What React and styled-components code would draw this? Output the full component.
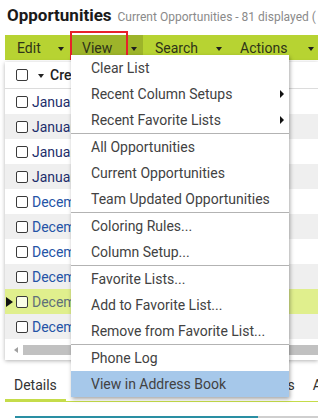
import React from 'react'
import styled, { createGlobalStyle } from 'styled-components'

const GlobalStyle = createGlobalStyle`
  body {
    margin: 0;
    font-family: Roboto, 'Liberation Sans', sans-serif;
    background: #fff;
    overflow: hidden;
  }
`;

const rows = [
    { label: 'January 2024', tone: 'navy' },
    { label: 'January 2024', tone: 'navy' },
    { label: 'January 2024', tone: 'navy' },
    { label: 'January 2024', tone: 'navy' },
    { label: 'December 2023', tone: 'blue' },
    { label: 'December 2023', tone: 'blue' },
    { label: 'December 2023', tone: 'blue' },
    { label: 'December 2023', tone: 'blue' },
    { label: 'December 2023', tone: 'blue', current: true },
    { label: 'December 2023', tone: 'blue' },
];

const menu = [
    [{ text: 'Clear List' }, { text: 'Recent Column Setups', sub: true }, { text: 'Recent Favorite Lists', sub: true }],
    [{ text: 'All Opportunities' }, { text: 'Current Opportunities' }, { text: 'Team Updated Opportunities' }],
    [{ text: 'Coloring Rules...' }, { text: 'Column Setup...' }],
    [{ text: 'Favorite Lists...' }, { text: 'Add to Favorite List...' }, { text: 'Remove from Favorite List...' }],
    [{ text: 'Phone Log' }, { text: 'View in Address Book', hover: true }],
];

const toolbar = [
    { label: 'Edit', width: 65 },
    { label: 'View', width: 73, active: true },
    { label: 'Search', width: 85 },
    { label: 'Actions', width: 92 },
];

export default function App() {
    return (
        <Page>
            <GlobalStyle />
            <Header>
                <Title>Opportunities</Title>
                <Subtitle>Current Opportunities - 81 displayed (</Subtitle>
            </Header>

            <Toolbar>
                {toolbar.map((b) => (
                    <ToolButton key={b.label} $width={b.width} $active={b.active}>
                        {b.label}
                        <Caret />
                    </ToolButton>
                ))}
            </Toolbar>
            <Annotation />

            <Grid>
                <HeadRow>
                    <Check />
                    <SortCaret />
                    <HeadLabel>Created</HeadLabel>
                </HeadRow>
                {rows.map((r, i) => (
                    <Row key={i} $odd={i % 2 === 1} $current={r.current}>
                        <Marker $show={r.current} />
                        <Check $light={r.current} />
                        <Cell $tone={r.current ? 'muted' : r.tone}>{r.label}</Cell>
                    </Row>
                ))}
                <Scroll>
                    <ScrollArrow />
                    <Thumb />
                </Scroll>
            </Grid>

            <Tabs>
                <Tab $active>Details</Tab>
                <Tab>Contacts</Tab>
                <Tab>Products</Tab>
                <Tab>Documents</Tab>
                <Tab>Activities</Tab>
            </Tabs>
            <Field />

            <Menu>
                {menu.map((group, g) => (
                    <Group key={g} $first={g === 0}>
                        {group.map((item) => (
                            <MenuItem key={item.text} $hover={item.hover}>
                                {item.text}
                                {item.sub && <SubArrow />}
                            </MenuItem>
                        ))}
                    </Group>
                ))}
            </Menu>
        </Page>
    )
}

const Page = styled.div`
    position: relative;
    width: 318px;
    height: 418px;
    overflow: hidden;
`;
const Header = styled.div`
    display: flex;
    align-items: baseline;
    gap: 6px;
    height: 35px;
    padding: 5px 0 0 7px;
    box-sizing: border-box;
    white-space: nowrap;
`;
const Title = styled.h1`
    margin: 0;
    font-size: 17px;
    font-weight: 700;
    color: #1a1a1a;
`;
const Subtitle = styled.span`
    font-size: 12px;
    color: #8a8a8a;
`;
const Toolbar = styled.div`
    display: flex;
    height: 25px;
    margin-left: 5px;
    background: #b7d332;
    white-space: nowrap;
`;
const ToolButton = styled.div`
    display: flex;
    align-items: center;
    flex: none;
    width: ${(p) => p.$width}px;
    padding: 0 6px 0 12px;
    box-sizing: border-box;
    font-size: 14px;
    color: #2f3318;
    background: ${(p) => (p.$active ? '#9db42a' : 'transparent')};
`;
const Caret = styled.span`
    margin-left: auto;
    margin-top: 3px;
    border-top: 4px solid #1e1e1e;
    border-left: 3.5px solid transparent;
    border-right: 3.5px solid transparent;
`;
const Annotation = styled.div`
    position: absolute;
    left: 70px;
    top: 31px;
    width: 58px;
    height: 29px;
    box-sizing: border-box;
    border: 2px solid #e8202a;
`;
const Grid = styled.div`
    margin: 2px 0 0 5px;
    background: #fff;
    box-shadow: 0 1px 4px rgba(0, 0, 0, 0.3);
`;
const HeadRow = styled.div`
    display: flex;
    align-items: center;
    height: 27px;
    padding-left: 11px;
    border-bottom: 1px solid #dcdcdc;
    box-sizing: border-box;
`;
const SortCaret = styled.span`
    margin: 2px 0 0 10px;
    border-top: 4px solid #222;
    border-left: 3.5px solid transparent;
    border-right: 3.5px solid transparent;
`;
const HeadLabel = styled.span`
    margin-left: 6px;
    font-size: 14px;
    font-weight: 500;
    color: #222;
`;
const Row = styled.div`
    display: flex;
    align-items: center;
    height: 25px;
    background: ${(p) => (p.$current ? '#e0ef8d' : p.$odd ? '#efefef' : '#fff')};
`;
const Marker = styled.span`
    width: 0;
    margin: 0 3px 0 1px;
    border-left: 7px solid ${(p) => (p.$show ? '#111' : 'transparent')};
    border-top: 5px solid transparent;
    border-bottom: 5px solid transparent;
`;
const Check = styled.span`
    flex: none;
    width: 12px;
    height: 12px;
    box-sizing: border-box;
    border: 1px solid #3a3a3a;
    border-radius: 2px;
    background: ${(p) => (p.$light ? '#fafde8' : '#fff')};
`;
const Cell = styled.span`
    margin-left: 4px;
    font-size: 14px;
    white-space: nowrap;
    color: ${(p) => ({ navy: '#1d2d6b', blue: '#2453a6', muted: '#5f6f7a' })[p.$tone]};
`;
const Scroll = styled.div`
    display: flex;
    align-items: center;
    height: 21px;
    padding: 4px 0 3px;
    box-sizing: border-box;
`;
const ScrollArrow = styled.span`
    margin: 0 5px 0 9px;
    border-right: 4px solid #a0a0a0;
    border-top: 3.5px solid transparent;
    border-bottom: 3.5px solid transparent;
`;
const Thumb = styled.span`
    flex: 1;
    height: 10px;
    background: #c1c1c1;
`;
const Tabs = styled.div`
    display: flex;
    margin: 10px 0 0 5px;
    height: 31px;
    border-bottom: 1px solid #c5dc4a;
    white-space: nowrap;
`;
const Tab = styled.div`
    flex: none;
    display: flex;
    align-items: center;
    padding: 0 9px;
    font-size: 14px;
    color: #333;
    border-bottom: ${(p) => (p.$active ? '3px solid #c5dc4a' : '3px solid transparent')};
    margin-bottom: -1px;
`;
const Field = styled.div`
    margin: 14px 0 0 15px;
    height: 2px;
    background: linear-gradient(to right, #2a8fa3 243px, #cfcfcf 243px);
`;
const Menu = styled.div`
    position: absolute;
    left: 71px;
    top: 55px;
    width: 218px;
    background: #fff;
    box-shadow: 1px 2px 4px rgba(0, 0, 0, 0.35);
`;
const Group = styled.div`
    border-top: ${(p) => (p.$first ? 'none' : '1px solid #b3b3b3')};
`;
const MenuItem = styled.div`
    display: flex;
    align-items: center;
    justify-content: space-between;
    height: 26px;
    padding: 0 5px 0 20px;
    font-size: 14px;
    color: #424242;
    white-space: nowrap;
    background: ${(p) => (p.$hover ? '#a6c8ea' : 'transparent')};
`;
const SubArrow = styled.span`
    border-left: 4px solid #111;
    border-top: 4px solid transparent;
    border-bottom: 4px solid transparent;
`;
